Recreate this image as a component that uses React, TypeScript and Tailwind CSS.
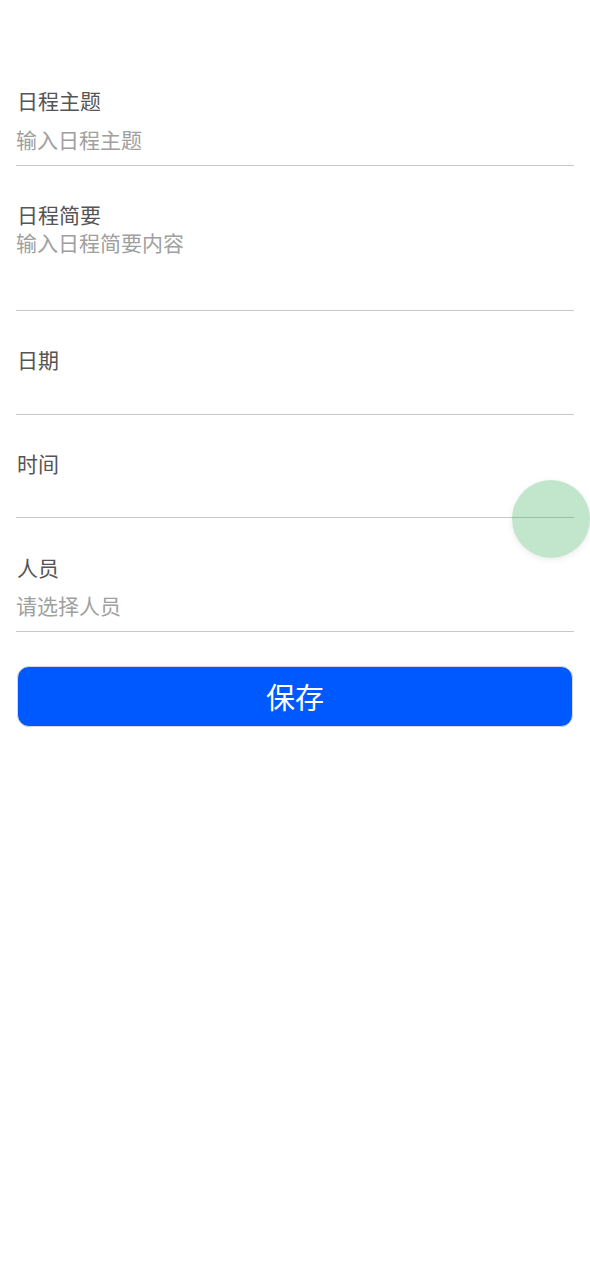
const font = { fontFamily: '"Noto Sans CJK SC", "Noto Sans", sans-serif' };

const Label = ({ children }: { children: string }) => (
  <div className="h-[28px] pl-[1px] text-[21px] leading-[28px] text-[#555555]">{children}</div>
);

export default function App() {
  return (
    <div className="relative min-h-[1280px] w-full bg-white" style={font}>
      <div className="px-4 pt-[86px]">
        {/* 日程主题 */}
        <div className="border-b-[1.5px] border-[#c8c8c8] pb-[12px]">
          <Label>日程主题</Label>
          <input
            className="mt-[11px] block h-[28px] w-full bg-transparent text-[21px] leading-[28px] text-[#333] outline-none placeholder:text-[#a0a0a0]"
            placeholder="输入日程主题"
          />
        </div>

        {/* 日程简要 */}
        <div className="border-b-[1.5px] border-[#c8c8c8] pt-[34px]">
          <Label>日程简要</Label>
          <textarea
            className="block h-[82px] w-full resize-none bg-transparent text-[21px] leading-[28px] text-[#333] outline-none placeholder:text-[#a0a0a0]"
            placeholder="输入日程简要内容"
          />
        </div>

        {/* 日期 */}
        <div className="border-b-[1.5px] border-[#c8c8c8] pt-[34px]">
          <Label>日期</Label>
          <div className="h-[41px]" />
        </div>

        {/* 时间 */}
        <div className="border-b-[1.5px] border-[#c8c8c8] pt-[34px]">
          <Label>时间</Label>
          <div className="h-[40px]" />
        </div>

        {/* 人员 */}
        <div className="border-b-[1.5px] border-[#c8c8c8] pt-[35px] pb-[12px]">
          <Label>人员</Label>
          <div className="mt-[10px] h-[28px] text-[21px] leading-[28px] text-[#a0a0a0]">请选择人员</div>
        </div>

        <button className="mx-[1px] mt-[34px] flex h-[61px] w-[calc(100%-2px)] items-center justify-center rounded-[12px] border border-[#d8d8d8] bg-[#0059ff] text-[29px] text-white">
          保存
        </button>
      </div>

      {/* floating ball */}
      <div className="absolute right-0 top-[480px] h-[78px] w-[78px] rounded-full bg-[rgba(52,172,85,0.3)] shadow-[0_2px_6px_rgba(0,0,0,0.08)]" />
    </div>
  );
}
